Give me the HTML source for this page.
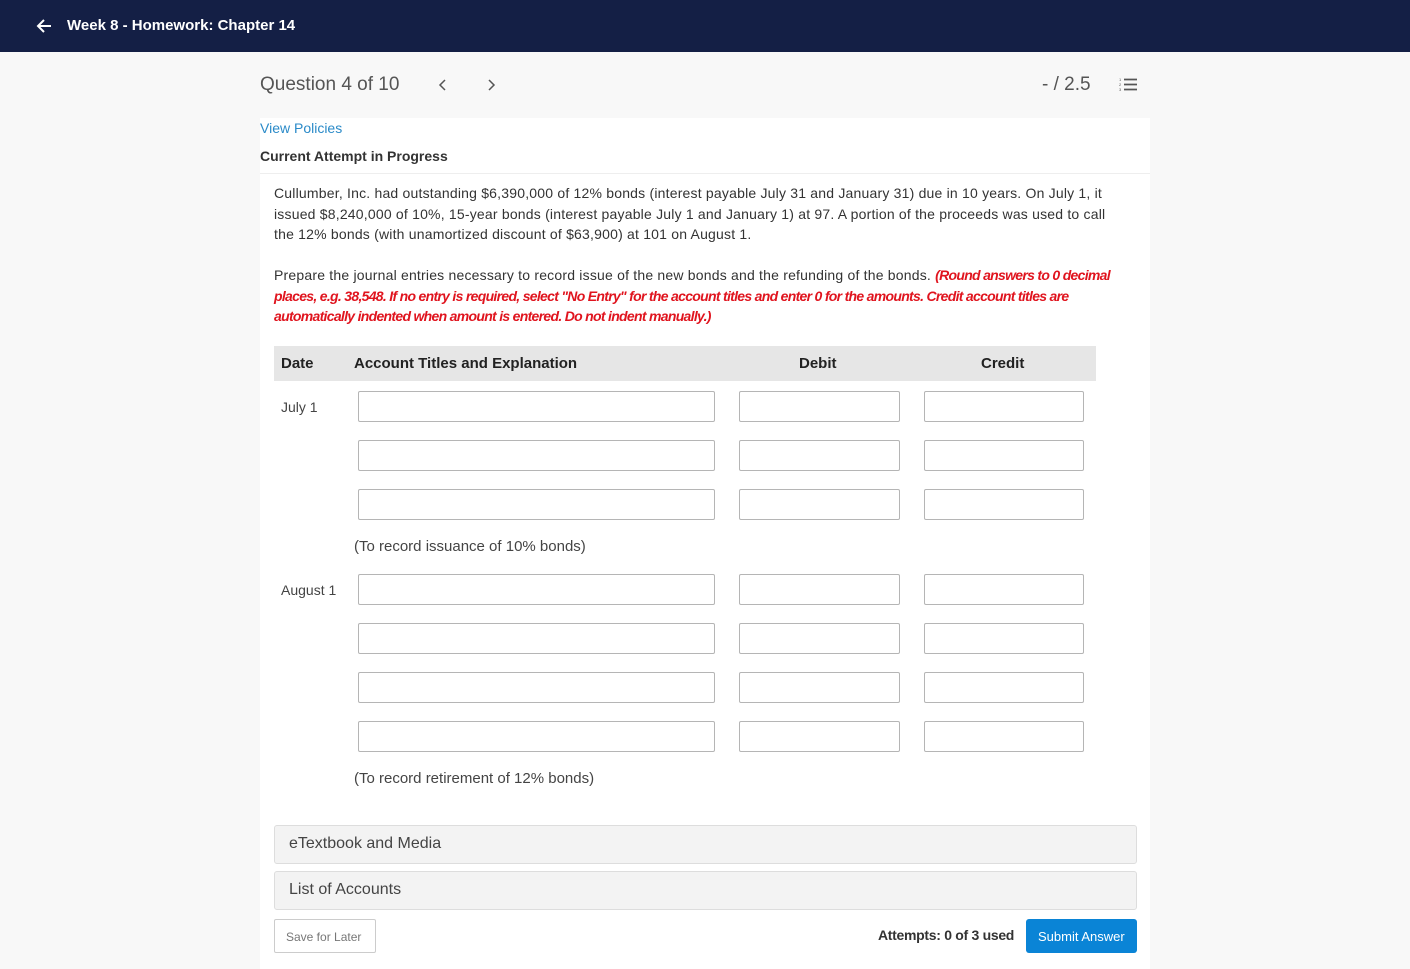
<!DOCTYPE html>
<html><head><meta charset="utf-8"><style>
*{box-sizing:border-box;margin:0;padding:0}
body{width:1410px;height:969px;background:#f8f8f8;font-family:"Liberation Sans",sans-serif;color:#333;position:relative;overflow:hidden}
.a{position:absolute;white-space:nowrap}
.top{left:0;top:0;width:1410px;height:52px;background:#141f45}
.main{left:260px;top:118px;width:890px;height:851px;background:#fff}
.inp{position:absolute;height:31px;border:1px solid #b5b5b5;border-radius:2px;background:#fff}
.acc{position:absolute;left:274px;width:863px;height:39px;background:#f3f3f3;border:1px solid #ddd;border-radius:3px;font-size:16px;color:#444;padding:9px 14px}
p.t{font-size:14px;line-height:20.5px;color:#333;letter-spacing:0.2px}
.red{color:#e0141e;font-style:italic;font-weight:bold;letter-spacing:-0.7px}
</style></head><body>
<div class="a top"></div>
<svg class="a" style="left:35px;top:17px" width="18" height="18" viewBox="0 0 18 18"><path d="M16 9H3M9 3L3 9l6 6" stroke="#fff" stroke-width="2" fill="none"/></svg>
<div class="a" style="left:67px;top:17px;color:#fff;font-weight:bold;font-size:15px">Week 8 - Homework: Chapter 14</div>
<div class="a" style="left:260px;top:74px;font-size:19px;color:#555">Question 4 of 10</div>
<svg class="a" style="left:437px;top:79px" width="12" height="12"><path d="M8 1L3 6l5 5" stroke="#555" stroke-width="1.5" fill="none"/></svg>
<svg class="a" style="left:485px;top:79px" width="12" height="12"><path d="M4 1l5 5-5 5" stroke="#555" stroke-width="1.5" fill="none"/></svg>
<div class="a" style="left:1042px;top:74px;font-size:19px;color:#555">- / 2.5</div>
<svg class="a" style="left:1119px;top:77px" width="20" height="16"><path d="M5 2.5h13M5 7.5h13M5 12.5h13" stroke="#555" stroke-width="1.8"/><text x="0" y="4" font-size="4" fill="#555">1</text><text x="0" y="9" font-size="4" fill="#555">2</text><text x="0" y="14" font-size="4" fill="#555">3</text></svg>
<div class="a main"></div>
<div class="a" style="left:260px;top:120px;font-size:14px;color:#2a8ac8">View Policies</div>
<div class="a" style="left:260px;top:148px;font-size:14px;font-weight:bold;color:#333">Current Attempt in Progress</div>
<div class="a" style="left:260px;top:173px;width:890px;height:1px;background:#eee"></div>
<p class="a t" style="left:274px;top:183px">Cullumber, Inc. had outstanding $6,390,000 of 12% bonds (interest payable July 31 and January 31) due in 10 years. On July 1, it<br>issued $8,240,000 of 10%, 15-year bonds (interest payable July 1 and January 1) at 97. A portion of the proceeds was used to call<br>the 12% bonds (with unamortized discount of $63,900) at 101 on August 1.</p>
<p class="a t" style="left:274px;top:265px">Prepare the journal entries necessary to record issue of the new bonds and the refunding of the bonds. <span class="red">(Round answers to 0 decimal</span><br><span class="red">places, e.g. 38,548. If no entry is required, select "No Entry" for the account titles and enter 0 for the amounts. Credit account titles are</span><br><span class="red">automatically indented when amount is entered. Do not indent manually.)</span></p>
<div class="a" style="left:274px;top:346px;width:822px;height:35px;background:#e6e6e6"></div>
<div class="a" style="left:281px;top:355px;font-weight:bold;font-size:15px;color:#222">Date</div>
<div class="a" style="left:354px;top:355px;font-weight:bold;font-size:15px;color:#222">Account Titles and Explanation</div>
<div class="a" style="left:799px;top:355px;font-weight:bold;font-size:15px;color:#222">Debit</div>
<div class="a" style="left:981px;top:355px;font-weight:bold;font-size:15px;color:#222">Credit</div>
<div class="a" style="left:281px;top:399px;font-size:14px;color:#444">July 1</div>
<div class="a" style="left:281px;top:582px;font-size:14px;color:#444">August 1</div>
<div class="a" style="left:354px;top:538px;font-size:15px;color:#444">(To record issuance of 10% bonds)</div>
<div class="a" style="left:354px;top:770px;font-size:15px;color:#444">(To record retirement of 12% bonds)</div>
<div class="inp" style="left:358px;top:391px;width:357px"></div><div class="inp" style="left:739px;top:391px;width:161px"></div><div class="inp" style="left:924px;top:391px;width:160px"></div>
<div class="inp" style="left:358px;top:440px;width:357px"></div><div class="inp" style="left:739px;top:440px;width:161px"></div><div class="inp" style="left:924px;top:440px;width:160px"></div>
<div class="inp" style="left:358px;top:489px;width:357px"></div><div class="inp" style="left:739px;top:489px;width:161px"></div><div class="inp" style="left:924px;top:489px;width:160px"></div>
<div class="inp" style="left:358px;top:574px;width:357px"></div><div class="inp" style="left:739px;top:574px;width:161px"></div><div class="inp" style="left:924px;top:574px;width:160px"></div>
<div class="inp" style="left:358px;top:623px;width:357px"></div><div class="inp" style="left:739px;top:623px;width:161px"></div><div class="inp" style="left:924px;top:623px;width:160px"></div>
<div class="inp" style="left:358px;top:672px;width:357px"></div><div class="inp" style="left:739px;top:672px;width:161px"></div><div class="inp" style="left:924px;top:672px;width:160px"></div>
<div class="inp" style="left:358px;top:721px;width:357px"></div><div class="inp" style="left:739px;top:721px;width:161px"></div><div class="inp" style="left:924px;top:721px;width:160px"></div>
<div class="acc" style="top:825px">eTextbook and Media</div>
<div class="acc" style="top:871px">List of Accounts</div>
<div class="a" style="left:274px;top:919px;width:102px;height:34px;border:1px solid #ccc;border-radius:2px;background:#fff;font-size:12px;color:#777;padding:10px 0 0 11px">Save for Later</div>
<div class="a" style="left:878px;top:927px;font-size:14px;font-weight:bold;letter-spacing:-0.3px;color:#333">Attempts: 0 of 3 used</div>
<div class="a" style="left:1026px;top:919px;width:111px;height:34px;background:#0a84d6;border-radius:3px;color:#fff;font-size:13px;padding:10px 0 0 12px">Submit Answer</div>
</body></html>
